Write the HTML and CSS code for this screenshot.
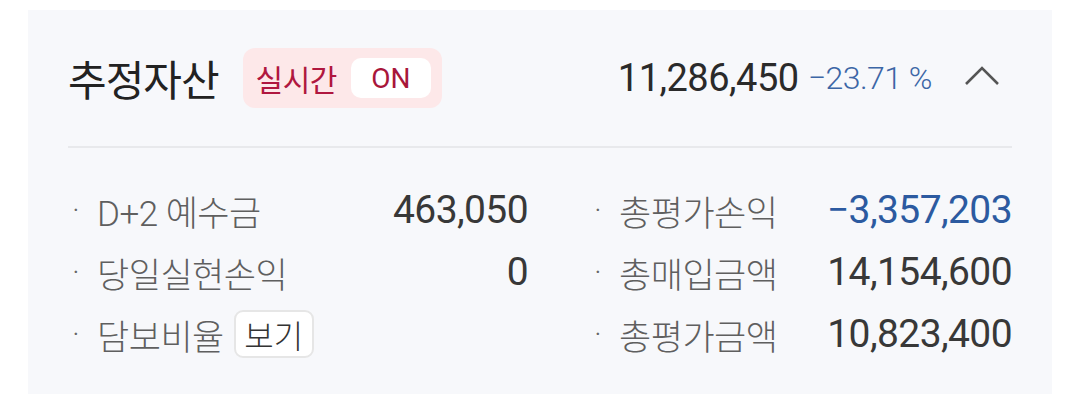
FILE: index.html
```html
<!DOCTYPE html>
<html lang="ko">
<head>
<meta charset="utf-8">
<link rel="stylesheet" href="styles.css">
</head>
<body>
<section class="card">
  <header class="head">
    <h1 class="title">추정자산</h1>
    <div class="badge"><span class="badge-label">실시간</span><span class="badge-on">ON</span></div>
    <div class="spacer"></div>
    <span class="total">11,286,450</span>
    <span class="rate">−23.71 %</span>
    <span class="chev"><svg width="36" height="20" viewBox="0 0 36 20"><polyline points="2,18 18,2 34,18" fill="none" stroke="#555" stroke-width="2.6"/></svg></span>
  </header>
  <div class="grid">
    <div class="col">
      <div class="row"><span class="dot">·</span><span class="label">D+2 예수금</span><span class="val">463,050</span></div>
      <div class="row"><span class="dot">·</span><span class="label">당일실현손익</span><span class="val">0</span></div>
      <div class="row"><span class="dot">·</span><span class="label">담보비율</span><span class="btn">보기</span></div>
    </div>
    <div class="col">
      <div class="row"><span class="dot">·</span><span class="label">총평가손익</span><span class="val neg">−3,357,203</span></div>
      <div class="row"><span class="dot">·</span><span class="label">총매입금액</span><span class="val">14,154,600</span></div>
      <div class="row"><span class="dot">·</span><span class="label">총평가금액</span><span class="val">10,823,400</span></div>
    </div>
  </div>
</section>
</body>
</html>
```
FILE: styles.css
```css
* { box-sizing: border-box; }
html, body { margin: 0; padding: 0; background: #ffffff; }
body {
  font-family: Roboto, "Noto Sans CJK KR", sans-serif;
  padding: 10px 28px 8px 28px;
}
.card {
  background: #f7f8fb;
  height: 384px;
  padding: 0 40px;
}
.head {
  display: flex;
  align-items: center;
  height: 138px;
  border-bottom: 2px solid #e8e9ec;
}
.title {
  margin: 0;
  font-family: "Noto Sans CJK KR", sans-serif;
  font-size: 42px;
  font-weight: 400;
  letter-spacing: -1px;
  color: #222;
  line-height: 1;
}
.badge {
  margin-left: 24px;
  display: flex;
  align-items: center;
  height: 60px;
  padding: 0 11px 0 13px;
  background: #fde8e9;
  border-radius: 12px;
}
.badge-label {
  font-family: "Noto Sans CJK KR", sans-serif;
  font-size: 30px;
  letter-spacing: -0.5px;
  color: #b0173f;
}
.badge-on {
  margin-left: 14px;
  width: 80px;
  height: 40px;
  background: #ffffff;
  border-radius: 10px;
  display: flex;
  align-items: center;
  justify-content: center;
  font-size: 28px;
  color: #a8163a;
}
.spacer { flex: 1; }
.total {
  font-size: 38px;
  color: #2a2a2a;
  letter-spacing: -0.5px;
}
.rate {
  margin-left: 9px;
  font-size: 32px;
  font-weight: 300;
  color: #3c66a6;
  letter-spacing: -0.5px;
}
.chev {
  margin-left: 32px;
  margin-right: 12px;
  display: flex;
  margin-top: -4px;
}
.grid {
  display: grid;
  grid-template-columns: 460px 1fr;
  column-gap: 62px;
  padding-top: 31px;
}
.col { display: flex; flex-direction: column; }
.row {
  display: flex;
  align-items: center;
  height: 62px;
}
.dot {
  width: 29px;
  padding-left: 5px;
  font-size: 22px;
  color: #666;
}
.label {
  font-size: 35px;
  font-weight: 300;
  letter-spacing: -0.5px;
  color: #5f5f5f;
}
.val {
  margin-left: auto;
  font-size: 39px;
  color: #383838;
  letter-spacing: -0.6px;
}
.val.neg { color: #2c5aa0; }
.btn {
  margin-left: 10px;
  width: 80px;
  height: 48px;
  background: #fff;
  border: 2px solid #e6e6e6;
  border-radius: 9px;
  display: flex;
  align-items: center;
  justify-content: center;
  font-size: 32px;
  font-weight: 300;
  color: #333;
}
```
